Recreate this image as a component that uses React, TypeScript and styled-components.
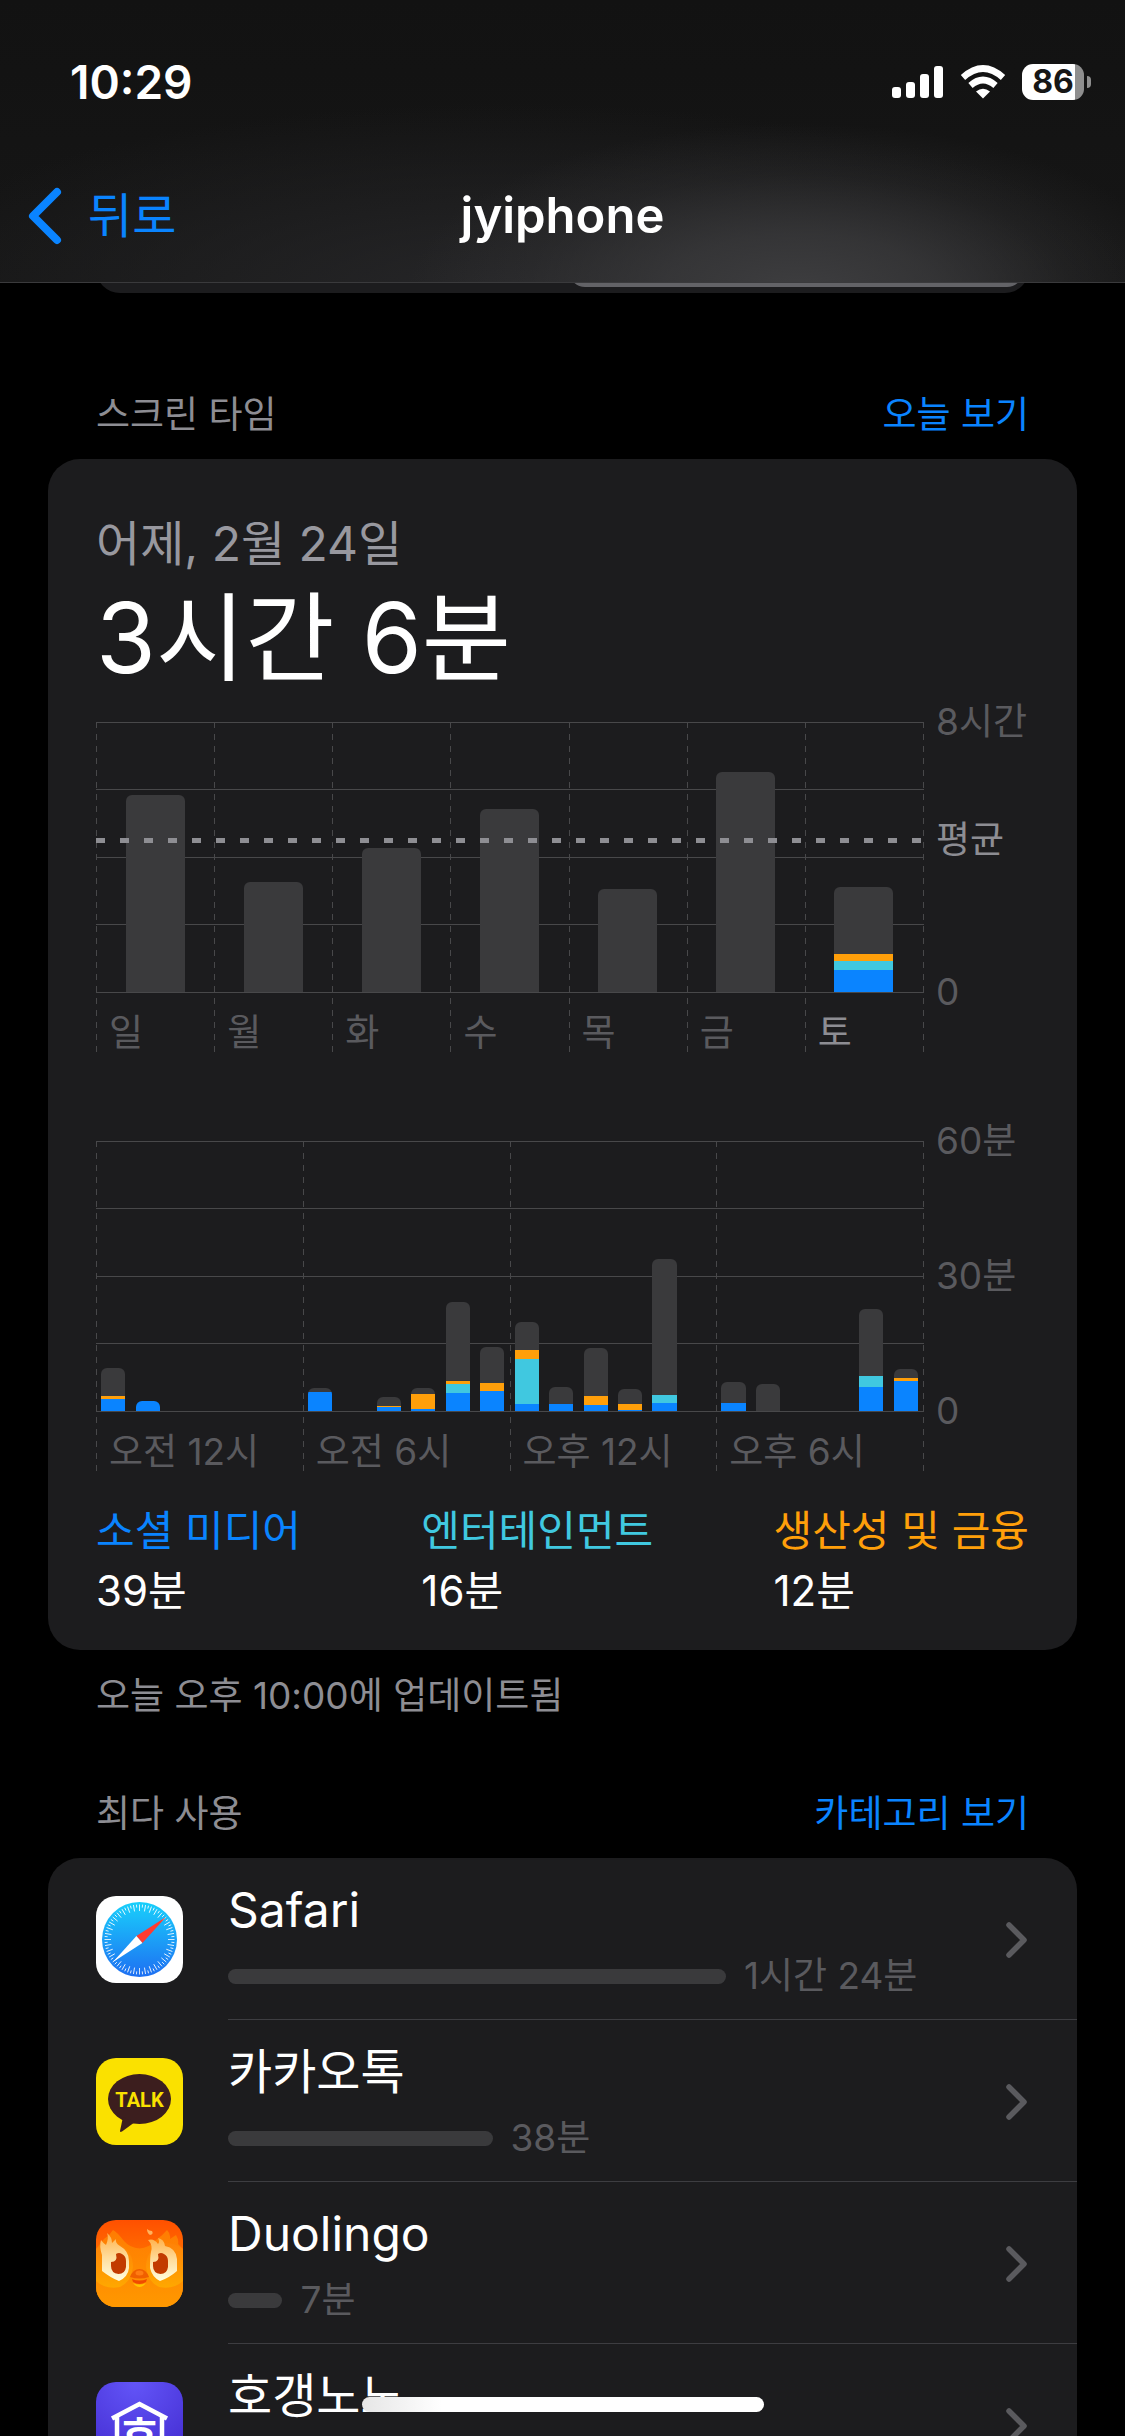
import React from 'react';
import styled, { createGlobalStyle } from 'styled-components';

const color = {
  page: '#000000',
  card: '#1c1c1e',
  text: '#ffffff',
  secondary: '#98989f',
  caption: '#8d8d93',
  faint: '#5a5a5e',
  grid: '#48484a',
  divider: '#3d3d41',
  bar: '#3a3a3c',
  blue: '#0a84ff',
  cyan: '#40c8e0',
  orange: '#ff9f0a',
};

const GlobalStyle = createGlobalStyle`
  * { box-sizing: border-box; }
  body {
    margin: 0;
    background: ${color.page};
    color: ${color.text};
    font-family: Inter, 'Noto Sans CJK KR', sans-serif;
  }
  h1, h2, p, ul, dl, dd { margin: 0; padding: 0; font-weight: 400; }
  ul { list-style: none; }
  a { color: inherit; text-decoration: none; }
  button { border: 0; padding: 0; background: none; font: inherit; cursor: pointer; }
`;

const Screen = styled.div`
  position: relative;
  display: flex;
  flex-direction: column;
  height: 100vh;
  overflow: hidden;
`;

const TopBar = styled.header`
  flex: none;
  border-bottom: 1px solid #3a3a3c;
  background:
    radial-gradient(
      ellipse 390px 170px at 71% 104%,
      rgba(62, 62, 64, 1) 0%,
      rgba(60, 60, 62, 0.75) 35%,
      rgba(60, 60, 62, 0.25) 70%,
      rgba(60, 60, 62, 0) 100%
    ),
    radial-gradient(ellipse 640px 190px at 45% 104%, #262628 0%, rgba(38, 38, 40, 0) 100%),
    linear-gradient(#121212, #161616);
`;

const StatusBar = styled.div`
  display: flex;
  align-items: center;
  justify-content: space-between;
  height: 132px;
  padding: 32px 34px 0 70px;
`;

const Clock = styled.time`
  font-size: 46px;
  line-height: 48px;
  font-weight: 600;
`;

const StatusIcons = styled.div`
  display: flex;
  align-items: center;
  gap: 16px;
`;

const Battery = styled.div`
  display: flex;
  align-items: center;
  gap: 3px;
`;

const BatteryCell = styled.div`
  width: 62px;
  height: 36px;
  border-radius: 11px;
  background: linear-gradient(90deg, #ffffff 86%, #8e8e8e 86%);
  color: #161616;
  font-size: 32px;
  line-height: 36px;
  font-weight: 700;
  text-align: center;
`;

const BatteryTip = styled.div`
  width: 4px;
  height: 12px;
  border-radius: 0 4px 4px 0;
  background: #8e8e8e;
`;

const NavBar = styled.nav`
  display: grid;
  grid-template-columns: 1fr auto 1fr;
  align-items: center;
  height: 150px;
  padding: 18px 28px 0;
`;

const BackButton = styled.button`
  display: flex;
  align-items: center;
  gap: 24px;
  justify-self: start;
  color: ${color.blue};
  font-size: 48px;
  line-height: 60px;
`;

const NavTitle = styled.h1`
  font-size: 49px;
  line-height: 60px;
  font-weight: 600;
`;

const Content = styled.main`
  flex: 1;
  min-height: 0;
  overflow: hidden;
  padding: 0 48px;
`;

const Segmented = styled.div`
  display: grid;
  grid-template-columns: 1fr 1fr;
  gap: 12px;
  height: 96px;
  margin: -86px 48px 98px;
  padding: 6px;
  border-radius: 24px;
  background: ${color.card};
`;

const Segment = styled.button<{ $active?: boolean }>`
  border-radius: 16px;
  background: ${(p) => (p.$active ? '#636367' : 'transparent')};
`;

const SectionHeader = styled.div`
  display: flex;
  justify-content: space-between;
  padding: 0 48px 20px;
  font-size: 37px;
  line-height: 48px;
`;

const SectionTitle = styled.h2`
  font-size: 37px;
  color: ${color.caption};
`;

const SectionLink = styled.a`
  color: ${color.blue};
`;

const Card = styled.section`
  border-radius: 32px;
  background: ${color.card};
`;

const SummaryCard = styled(Card)`
  padding: 57px 48px 29px;
`;

const SummaryDate = styled.p`
  color: ${color.secondary};
  font-size: 48px;
  line-height: 56px;
`;

const SummaryTotal = styled.p`
  margin: 10px 0 28px;
  font-size: 97px;
  line-height: 112px;
`;

const Chart = styled.div`
  display: grid;
  grid-template-columns: 1fr 105px;
  & + & { margin-top: 89px; }
`;

const Plot = styled.div`
  position: relative;
  display: flex;
  height: 330px;
  padding-right: 1px;
  background:
    repeating-linear-gradient(${color.grid} 0 6px, transparent 6px 12px) right / 1px 100% no-repeat,
    linear-gradient(${color.grid}, ${color.grid}) 0 0 / 100% 1px no-repeat,
    linear-gradient(${color.grid}, ${color.grid}) 0 67px / 100% 1px no-repeat,
    linear-gradient(${color.grid}, ${color.grid}) 0 135px / 100% 1px no-repeat,
    linear-gradient(${color.grid}, ${color.grid}) 0 202px / 100% 1px no-repeat,
    linear-gradient(${color.grid}, ${color.grid}) 0 270px / 100% 1px no-repeat;
`;

const Column = styled.div`
  flex: 1;
  min-width: 0;
  background: repeating-linear-gradient(${color.grid} 0 6px, transparent 6px 12px) left / 1px 100% no-repeat;
`;

const Bars = styled.div`
  display: flex;
  align-items: flex-end;
  height: 270px;
`;

const Slot = styled.div`
  display: flex;
  justify-content: center;
  flex: 1;
`;

const Bar = styled.div<{ $wide?: boolean }>`
  width: ${(p) => (p.$wide ? '50%' : '70%')};
  overflow: hidden;
  border-radius: 6px 6px 0 0;
`;

const Part = styled.div<{ $color: string }>`
  background: ${(p) => p.$color};
`;

const ColumnLabel = styled.p<{ $active?: boolean }>`
  padding: 17px 0 0 13px;
  color: ${(p) => (p.$active ? color.caption : color.faint)};
  font-size: 37px;
  line-height: 48px;
  white-space: nowrap;
`;

const AverageLine = styled.div`
  position: absolute;
  left: 0;
  right: 0;
  height: 5px;
  background: repeating-linear-gradient(90deg, #8e8e93 0 9px, transparent 9px 24px);
`;

const Axis = styled.div`
  display: flex;
  flex-direction: column;
  height: 306px;
  margin-top: -18px;
  padding-left: 12px;
`;

const AxisLabel = styled.span<{ $active?: boolean }>`
  color: ${(p) => (p.$active ? color.caption : color.faint)};
  font-size: 37px;
  line-height: 36px;
  white-space: nowrap;
`;

const AxisGap = styled.span<{ $share: number }>`
  flex: ${(p) => p.$share} 0 0;
`;

const Legend = styled.dl`
  display: flex;
  justify-content: space-between;
  margin-top: 30px;
  font-size: 42px;
  line-height: 60px;
`;

const LegendName = styled.dt<{ $color: string }>`
  color: ${(p) => p.$color};
`;

const Footnote = styled.p`
  margin: 22px 48px 70px;
  color: ${color.caption};
  font-size: 37px;
  line-height: 48px;
`;

const AppRow = styled.a`
  display: flex;
  align-items: center;
  gap: 45px;
  padding-left: 48px;
`;

const AppIcon = styled.svg`
  flex: none;
  width: 87px;
  height: 87px;
`;

const AppBody = styled.div`
  display: flex;
  flex: 1;
  align-items: center;
  height: 162px;
  padding: 22px 50px 19px 0;
  border-bottom: 1px solid ${color.divider};
`;

const AppText = styled.div`
  flex: 1;
  display: grid;
  gap: 12px;
`;

const AppName = styled.span`
  font-size: 48px;
  line-height: 60px;
`;

const Usage = styled.span`
  display: flex;
  align-items: center;
  gap: 18px;
  height: 48px;
  color: ${color.faint};
  font-size: 37px;
  line-height: 48px;
`;

const UsageBar = styled.span`
  height: 15px;
  border-radius: 8px;
  background: ${color.bar};
`;

const HomeIndicator = styled.div`
  position: absolute;
  left: 50%;
  bottom: 24px;
  width: 402px;
  height: 15px;
  margin-left: -201px;
  border-radius: 8px;
  background: linear-gradient(90deg, #e6e6e6, #ffffff 20%);
`;

type Parts = { rest?: number; orange?: number; cyan?: number; blue?: number };

const week: { day: string; parts: Parts; active?: boolean }[] = [
  { day: '일', parts: { rest: 197 } },
  { day: '월', parts: { rest: 110 } },
  { day: '화', parts: { rest: 144 } },
  { day: '수', parts: { rest: 183 } },
  { day: '목', parts: { rest: 103 } },
  { day: '금', parts: { rest: 220 } },
  { day: '토', parts: { rest: 67, orange: 7, cyan: 9, blue: 22 }, active: true },
];

const hours: { label: string; slots: Parts[] }[] = [
  { label: '오전 12시', slots: [{ rest: 28, orange: 3, blue: 12 }, { blue: 10 }, {}, {}, {}, {}] },
  {
    label: '오전 6시',
    slots: [
      { rest: 4, blue: 19 },
      {},
      { rest: 9, orange: 1, blue: 4 },
      { rest: 6, orange: 15, blue: 2 },
      { rest: 79, orange: 3, cyan: 9, blue: 18 },
      { rest: 36, orange: 8, blue: 20 },
    ],
  },
  {
    label: '오후 12시',
    slots: [
      { rest: 28, orange: 9, cyan: 45, blue: 7 },
      { rest: 17, blue: 7 },
      { rest: 48, orange: 9, blue: 6 },
      { rest: 15, orange: 6, blue: 1 },
      { rest: 136, cyan: 8, blue: 8 },
      {},
    ],
  },
  {
    label: '오후 6시',
    slots: [
      { rest: 21, blue: 8 },
      { rest: 27 },
      {},
      {},
      { rest: 67, cyan: 11, blue: 24 },
      { rest: 9, orange: 3, blue: 30 },
    ],
  },
];

const partColors: [keyof Parts, string][] = [
  ['rest', color.bar],
  ['orange', color.orange],
  ['cyan', color.cyan],
  ['blue', color.blue],
];

function StackedBar({ parts, wide }: { parts: Parts; wide?: boolean }) {
  return (
    <Slot>
      <Bar $wide={wide}>
        {partColors.map(([key, fill]) =>
          parts[key] ? <Part key={key} $color={fill} style={{ height: parts[key] }} /> : null,
        )}
      </Bar>
    </Slot>
  );
}

function SafariIcon() {
  return (
    <AppIcon viewBox="0 0 87 87" aria-hidden="true">
      <defs>
        <linearGradient id="safari" x1="0" y1="0" x2="0" y2="1">
          <stop offset="0" stopColor="#19d0fb" />
          <stop offset="1" stopColor="#1e6ff2" />
        </linearGradient>
      </defs>
      <rect width="87" height="87" rx="20" fill="#ffffff" />
      <circle cx="43.5" cy="43.5" r="37.5" fill="url(#safari)" />
      {Array.from({ length: 72 }, (_, i) => (
        <line
          key={i}
          x1="43.5"
          x2="43.5"
          y1="8.5"
          y2={i % 2 ? 11.5 : 15}
          stroke="#ffffff"
          strokeWidth="0.8"
          transform={`rotate(${i * 5} 43.5 43.5)`}
        />
      ))}
      <path d="M70 21 L40.4 40 L46.4 47 Z" fill="#ff3b30" />
      <path d="M17 66 L40.4 40 L46.4 47 Z" fill="#ffffff" />
    </AppIcon>
  );
}

function KakaoIcon() {
  return (
    <AppIcon viewBox="0 0 87 87" aria-hidden="true">
      <rect width="87" height="87" rx="20" fill="#fae100" />
      <ellipse cx="43.5" cy="41" rx="31.5" ry="25" fill="#3c1e1e" />
      <path d="M27 59 L24 73 Q24 74.500 26 73.500 L39 64 Z" fill="#3c1e1e" />
      <text x="43.5" y="48.500" textAnchor="middle" fontFamily="Roboto, sans-serif" fontSize="20" fontWeight="700" fill="#fae100">
        TALK
      </text>
    </AppIcon>
  );
}

function DuolingoIcon() {
  return (
    <AppIcon viewBox="0 0 87 87" aria-hidden="true">
      <defs>
        <linearGradient id="duo-bg" x1="0" y1="0" x2="0" y2="1">
          <stop offset="0" stopColor="#ff5000" />
          <stop offset="0.35" stopColor="#ff6a00" />
          <stop offset="1" stopColor="#ff9900" />
        </linearGradient>
        <linearGradient id="duo-face" x1="0" y1="0" x2="0" y2="1">
          <stop offset="0" stopColor="#ff7c02" />
          <stop offset="1" stopColor="#ff9800" />
        </linearGradient>
        <linearGradient id="duo-cheek" x1="0" y1="0" x2="0" y2="1">
          <stop offset="0" stopColor="#ff8208" />
          <stop offset="1" stopColor="#ffa800" />
        </linearGradient>
        <linearGradient id="duo-eye" x1="0" y1="0" x2="0" y2="1">
          <stop offset="0" stopColor="#ffb04a" />
          <stop offset="0.5" stopColor="#ffdc9a" />
          <stop offset="1" stopColor="#fffde0" />
        </linearGradient>
        <clipPath id="duo-clip">
          <rect width="87" height="87" rx="20" />
        </clipPath>
      </defs>
      <g clipPath="url(#duo-clip)">
        <rect width="87" height="87" fill="url(#duo-bg)" />
        <path d="M0 29 L8 19 Q14 15 17 10 Q21 12 28 21 Q34 28 43.500 28.500 Q53 28 60 20 Q67 15 71 10 Q75 14 74 19 L80 15 Q83 20 82 24 L87 29 V87 H0 Z" fill="url(#duo-face)" />
        <path d="M0 29 Q12 20 25 25 Q37 32 37 47 Q35 62 24 67 Q10 70 0 61 Z" fill="url(#duo-cheek)" />
        <path d="M87 29 Q75 20 62 25 Q50 32 50 47 Q52 62 63 67 Q77 70 87 61 Z" fill="url(#duo-cheek)" />
        <path d="M6 51 V35 Q3 26 5 20 Q8 24 10 25 Q13 18 11 13 Q16 17 16 23 L20 19 Q19 23 24 26 Q33 31 33 41 V48 Q32 57 23 61 Q15 58 6 51 Z" fill="url(#duo-eye)" />
        <path d="M81 51 V39 Q80 28 69 26 Q68 19 62 18 Q64 22 62 24 Q58 18 52 20 Q57 25 55 32 Q54 36 54 48 Q56 57 64 61 Q73 58 81 51 Z" fill="url(#duo-eye)" />
        <path d="M51 9 Q53 11 56 11 Q58 14 54 15 Q51 13 51 9 Z" fill="#ffb25c" />
        <path d="M15 42 Q22 42 20 34 Q23 32 26 34 Q30 36 30 41 V47 Q29 54 22.500 54 Q15 53 15 46 Z" fill="#c23b00" />
        <path d="M57 42 Q64 42 62 34 Q65 32 68 34 Q72 36 72 41 V47 Q71 54 64.500 54 Q57 53 57 46 Z" fill="#c23b00" />
        <path d="M34 57 Q37 49 43.500 49 Q50 49 53 57 Q43.500 60 34 57 Z" fill="#f05f00" />
        <ellipse cx="43.500" cy="53" rx="4" ry="2.500" fill="#ff7c12" />
        <path d="M36 59 Q43.500 62 51 59 L50 62 Q43.500 66 37 62 Z" fill="#f04a00" />
        <path d="M37 63 Q43.500 66 50 63 Q47 67 43.500 67 Q40 67 37 63 Z" fill="#ffc400" />
      </g>
    </AppIcon>
  );
}

function HogangnonoIcon() {
  return (
    <AppIcon viewBox="0 0 87 87" aria-hidden="true">
      <defs>
        <radialGradient id="hogang" cx="0.45" cy="0" r="0.9">
          <stop offset="0" stopColor="#6355f8" />
          <stop offset="1" stopColor="#4630d4" />
        </radialGradient>
      </defs>
      <rect width="87" height="87" rx="20" fill="url(#hogang)" />
      <path d="M16 36.500 L43.500 22 L71 36.500 M21 35 V70 H66 V35" fill="none" stroke="#ffffff" strokeWidth="4.500" />
      <text x="43.500" y="69" textAnchor="middle" fontFamily="'Noto Sans CJK KR', sans-serif" fontSize="41" fontWeight="700" fill="#ffffff">
        호
      </text>
    </AppIcon>
  );
}

const apps = [
  { name: 'Safari', time: '1시간 24분', share: 64, Icon: SafariIcon },
  { name: '카카오톡', time: '38분', share: 34, Icon: KakaoIcon },
  { name: 'Duolingo', time: '7분', share: 7, Icon: DuolingoIcon },
  { name: '호갱노노', time: '', share: 0, Icon: HogangnonoIcon },
];

const legend = [
  { name: '소셜 미디어', time: '39분', fill: color.blue },
  { name: '엔터테인먼트', time: '16분', fill: color.cyan },
  { name: '생산성 및 금융', time: '12분', fill: color.orange },
];

export default function App() {
  return (
    <Screen>
      <GlobalStyle />
      <TopBar>
        <StatusBar>
          <Clock>10:29</Clock>
          <StatusIcons>
            <svg width="52" height="34" viewBox="0 0 52 34" fill="#ffffff" aria-hidden="true">
              <rect x="0" y="22" width="9" height="11" rx="3" />
              <rect x="14" y="17" width="9" height="16" rx="3" />
              <rect x="28" y="9" width="9" height="24" rx="3" />
              <rect x="42" y="1" width="9" height="32" rx="3" />
            </svg>
            <svg width="46" height="34" viewBox="0 0 46 34" aria-hidden="true">
              <path d="M3 12.500 Q23 -5.500 43 12.500" fill="none" stroke="#ffffff" strokeWidth="6.500" />
              <path d="M10.500 20.500 Q23 9.500 35.500 20.500" fill="none" stroke="#ffffff" strokeWidth="6.500" />
              <path d="M16 26.500 Q23 21 30 26.500 L23 33.500 Z" fill="#ffffff" />
            </svg>
            <Battery>
              <BatteryCell>86</BatteryCell>
              <BatteryTip />
            </Battery>
          </StatusIcons>
        </StatusBar>
        <NavBar>
          <BackButton type="button">
            <svg width="36" height="60" viewBox="0 0 36 60" aria-hidden="true">
              <path d="M29 6 L5 30 L29 54" fill="none" stroke={color.blue} strokeWidth="8" strokeLinecap="round" strokeLinejoin="round" />
            </svg>
            뒤로
          </BackButton>
          <NavTitle>jyiphone</NavTitle>
        </NavBar>
      </TopBar>

      <Content>
        <Segmented>
          <Segment type="button" aria-label="주" />
          <Segment type="button" aria-label="일" $active />
        </Segmented>

        <SectionHeader>
          <SectionTitle>스크린 타임</SectionTitle>
          <SectionLink href="#today">오늘 보기</SectionLink>
        </SectionHeader>
        <SummaryCard>
          <SummaryDate>어제, 2월 24일</SummaryDate>
          <SummaryTotal>3시간 6분</SummaryTotal>

          <Chart>
            <Plot>
              {week.map(({ day, parts, active }) => (
                <Column key={day}>
                  <Bars>
                    <StackedBar parts={parts} wide />
                  </Bars>
                  <ColumnLabel $active={active}>{day}</ColumnLabel>
                </Column>
              ))}
              <AverageLine style={{ top: 116 }} />
            </Plot>
            <Axis>
              <AxisLabel>8시간</AxisLabel>
              <AxisGap $share={82} />
              <AxisLabel $active>평균</AxisLabel>
              <AxisGap $share={116} />
              <AxisLabel>0</AxisLabel>
            </Axis>
          </Chart>

          <Chart>
            <Plot>
              {hours.map(({ label, slots }) => (
                <Column key={label}>
                  <Bars>
                    {slots.map((parts, i) => (
                      <StackedBar key={i} parts={parts} />
                    ))}
                  </Bars>
                  <ColumnLabel>{label}</ColumnLabel>
                </Column>
              ))}
            </Plot>
            <Axis>
              <AxisLabel>60분</AxisLabel>
              <AxisGap $share={1} />
              <AxisLabel>30분</AxisLabel>
              <AxisGap $share={1} />
              <AxisLabel>0</AxisLabel>
            </Axis>
          </Chart>

          <Legend>
            {legend.map(({ name, time, fill }) => (
              <div key={name}>
                <LegendName $color={fill}>{name}</LegendName>
                <dd>{time}</dd>
              </div>
            ))}
          </Legend>
        </SummaryCard>
        <Footnote>오늘 오후 10:00에 업데이트됨</Footnote>

        <SectionHeader>
          <SectionTitle>최다 사용</SectionTitle>
          <SectionLink href="#categories">카테고리 보기</SectionLink>
        </SectionHeader>
        <Card>
          <ul>
            {apps.map(({ name, time, share, Icon }) => (
              <li key={name}>
                <AppRow href="#app">
                  <Icon />
                  <AppBody>
                    <AppText>
                      <AppName>{name}</AppName>
                      <Usage>
                        <UsageBar style={{ width: `${share}%` }} />
                        {time}
                      </Usage>
                    </AppText>
                    <svg width="21" height="36" viewBox="0 0 21 36" aria-hidden="true">
                      <path d="M3 3 L18 18 L3 33" fill="none" stroke={color.faint} strokeWidth="5.500" strokeLinecap="round" strokeLinejoin="round" />
                    </svg>
                  </AppBody>
                </AppRow>
              </li>
            ))}
          </ul>
        </Card>
      </Content>
      <HomeIndicator />
    </Screen>
  );
}
